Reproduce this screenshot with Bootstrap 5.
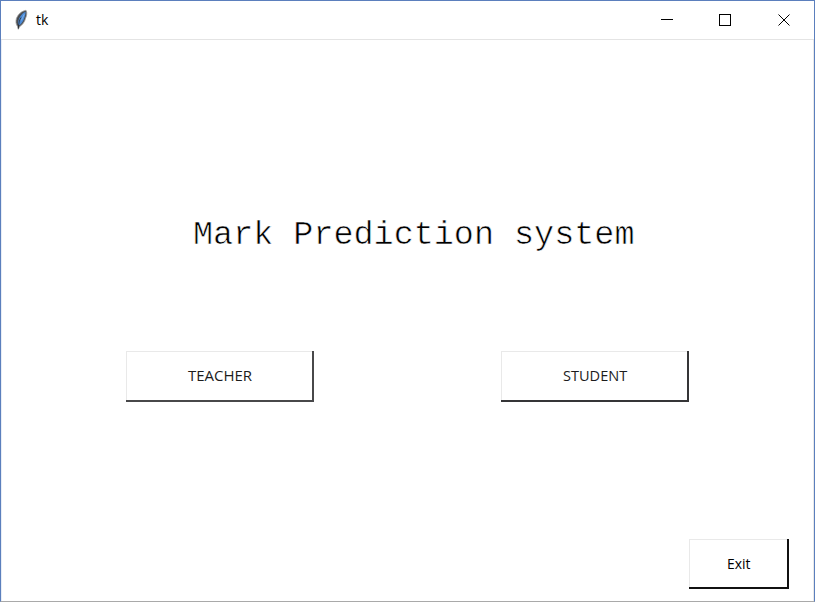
<!DOCTYPE html>
<html lang="en">
<head>
<meta charset="utf-8">
<meta name="viewport" content="width=device-width, initial-scale=1">
<title>tk</title>
<link href="https://cdn.jsdelivr.net/npm/bootstrap@5.3.0/dist/css/bootstrap.min.css" rel="stylesheet">
<style>
body { font-family: "Open Sans", "Noto Sans", sans-serif; color: #000; }
.tk-window { border: 1px solid #5b7fbd; border-bottom-color: #a9a9a9; }
.titlebar { height: 39px; border-bottom: 1px solid #e4e4e4; padding: 0 1px 0 12px; }
.titlebar-text { font-size: 14px; line-height: 20px; margin-left: 7px; }
.win-btn { width: 58.5px; height: 38px; }
.win-btn svg, .feather { display: block; }
.client { border-left: 1px solid #e8edf5; border-right: 1px solid #e8e8e8; }
.heading { font: 400 33.45px/40px "Liberation Mono", monospace; margin: 175px 0 0 191px; white-space: pre;
  color: #000; -webkit-text-stroke: .6px #fff; }
.choices { margin: 96px 124px 0 124px; }
.tk-btn { width: 188px; height: 51px; background: #fff; border: 0; border-radius: 0; padding: 0 0 3px 0;
  font-size: 15px; line-height: 20px; color: #1c1c1c;
  box-shadow: inset -2px -2px #48484a, inset 1px 1px #e9e9e9; }
.tk-btn span { display: inline-block; }
.tk-student { box-shadow: inset -2px -2px #353537, inset 1px 1px #e9e9e9; }
.tk-student span { transform: scaleX(.97); }
.tk-exit { width: 100px; height: 50px; color: #000; padding-bottom: 2px; margin: 137px 24px 0 auto; box-shadow: inset -2px -2px #111, inset 1px 1px #e9e9e9; }
.tk-exit span { transform: scaleX(.93); }
</style>
</head>
<body>
<div class="tk-window vh-100 d-flex flex-column bg-white overflow-hidden">
  <header class="titlebar d-flex align-items-center flex-shrink-0">
    <svg class="feather" width="16" height="22" viewBox="0 0 16 22">
      <path d="M13 1.3C8.5 2 5 5.5 3.4 9.5C2.6 12.5 2.8 15 4.5 17.5L5.3 20.3L6.5 17.8C9.7 15.8 11.8 12.5 12.5 9.5C13.8 6.5 14.4 3.5 13 1.3Z" fill="#4a4d52" stroke="#a0a0a0" stroke-width=".8"/>
      <path d="M12.7 2.8C8.3 4.5 5.2 9.5 4.9 15.3L6.6 16.3C10 13.5 12.2 8.5 12.7 2.8Z" fill="#4b8ad6"/>
      <path d="M8 8.5C6.4 11 5.6 14 5.4 19.7" fill="none" stroke="#24282f" stroke-width=".8"/>
      <path d="M11.2 5.2L8.4 11.5" fill="none" stroke="#7fb0e8"/>
    </svg>
    <span class="titlebar-text">tk</span>
    <div class="d-flex ms-auto">
      <div class="win-btn d-flex align-items-center justify-content-center"><svg width="12" height="12" shape-rendering="crispEdges"><path d="M0 5.5H12" stroke="#000"/></svg></div>
      <div class="win-btn d-flex align-items-center justify-content-center"><svg width="12" height="12" shape-rendering="crispEdges"><path d="M.5 .5H11.5V11.5H.5Z" fill="none" stroke="#000"/></svg></div>
      <div class="win-btn d-flex align-items-center justify-content-center"><svg width="12" height="12"><path d="M.5 .5L11.5 11.5M11.5 .5L.5 11.5" stroke="#000" stroke-width="1"/></svg></div>
    </div>
  </header>
  <main class="client flex-grow-1 d-flex flex-column">
    <h1 class="heading">Mark Prediction system</h1>
    <div class="choices d-flex justify-content-between">
      <button type="button" class="btn tk-btn"><span>TEACHER</span></button>
      <button type="button" class="btn tk-btn tk-student"><span>STUDENT</span></button>
    </div>
    <button type="button" class="btn tk-btn tk-exit"><span>Exit</span></button>
  </main>
</div>
<script src="https://cdn.jsdelivr.net/npm/bootstrap@5.3.0/dist/js/bootstrap.bundle.min.js"></script>
</body>
</html>
